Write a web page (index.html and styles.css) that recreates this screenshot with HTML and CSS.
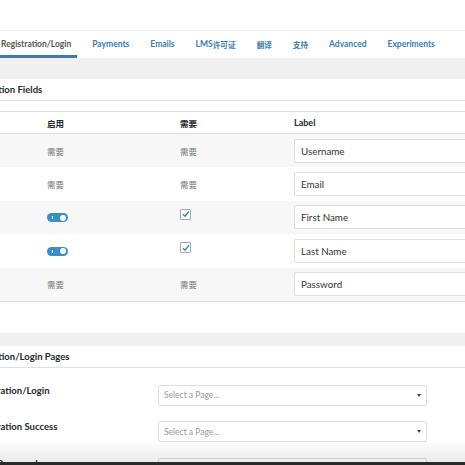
FILE: index.html
```html
<!DOCTYPE html>
<html lang="zh">
<head>
    <meta charset="UTF-8">
    <title>Registration/Login</title>
    <link rel="stylesheet" href="styles.css">
</head>
<body>

<div class="page">
    <div class="top-space"></div>

    <nav class="tabs">
        <a class="tab active">Registration/Login</a>
        <a class="tab">Payments</a>
        <a class="tab">Emails</a>
        <a class="tab">LMS<span class="cjk">许可证</span></a>
        <a class="tab cjk">翻译</a>
        <a class="tab cjk">支持</a>
        <a class="tab">Advanced</a>
        <a class="tab">Experiments</a>
    </nav>

    <div class="band"></div>

    <section class="card">
        <h2 class="card-title">Registration Fields</h2>
        <div class="card-body">
            <div class="fields">
                <div class="row head">
                    <div class="cell name">Field</div>
                    <div class="cell cjk">启用</div>
                    <div class="cell cjk">需要</div>
                    <div class="cell">Label</div>
                </div>
                <div class="row odd">
                    <div class="cell name">Username</div>
                    <div class="cell muted">需要</div>
                    <div class="cell muted">需要</div>
                    <div class="cell"><input class="text-input" type="text" value="Username"></div>
                </div>
                <div class="row">
                    <div class="cell name">Email</div>
                    <div class="cell muted">需要</div>
                    <div class="cell muted">需要</div>
                    <div class="cell"><input class="text-input" type="text" value="Email"></div>
                </div>
                <div class="row odd">
                    <div class="cell name">First Name</div>
                    <div class="cell"><span class="toggle"><span class="toggle-mark"></span><span class="toggle-knob"></span></span></div>
                    <div class="cell"><span class="checkbox"><svg width="8" height="8" viewBox="0 0 8 8"><path d="M1 4.2 L3.1 6.2 L7 1.4" fill="none" stroke="#2f7db6" stroke-width="1.3"/></svg></span></div>
                    <div class="cell"><input class="text-input" type="text" value="First Name"></div>
                </div>
                <div class="row">
                    <div class="cell name">Last Name</div>
                    <div class="cell"><span class="toggle"><span class="toggle-mark"></span><span class="toggle-knob"></span></span></div>
                    <div class="cell"><span class="checkbox"><svg width="8" height="8" viewBox="0 0 8 8"><path d="M1 4.2 L3.1 6.2 L7 1.4" fill="none" stroke="#2f7db6" stroke-width="1.3"/></svg></span></div>
                    <div class="cell"><input class="text-input" type="text" value="Last Name"></div>
                </div>
                <div class="row odd">
                    <div class="cell name">Password</div>
                    <div class="cell muted">需要</div>
                    <div class="cell muted">需要</div>
                    <div class="cell"><input class="text-input" type="text" value="Password"></div>
                </div>
            </div>
        </div>
    </section>

    <div class="band small"></div>

    <section class="card">
        <h2 class="card-title">Registration/Login Pages</h2>
        <div class="pages">
            <div class="page-row">
                <label class="page-label">Registration/Login</label>
                <div class="select"><span>Select a Page...</span><span class="arrow"></span></div>
            </div>
            <div class="page-row">
                <label class="page-label">Registration Success</label>
                <div class="select"><span>Select a Page...</span><span class="arrow"></span></div>
            </div>
            <div class="page-row">
                <label class="page-label">Reset Password</label>
                <div class="select"><span>Select a Page...</span><span class="arrow"></span></div>
            </div>
        </div>
    </section>
</div>

<div class="window-edge"></div>

</body>
</html>
```

FILE: styles.css
```css
body {
    margin: 0;
    padding: 0;
    font-family: Lato, "Noto Sans CJK SC", sans-serif;
    color: #23282d;
    background-color: #fff;
    overflow: hidden;
}
.page {
    margin-left: -100px;
    width: 620px;
}
.cjk {
    font-size: 0.9em;
}
.top-space {
    height: 30px;
}
.tabs {
    display: flex;
    gap: 9px;
    height: 27px;
    padding-left: 95px;
    border-top: 1px solid #ececec;
}
.tab {
    display: flex;
    align-items: center;
    padding: 2px 6px 0;
    font-size: 8.5px;
    font-weight: bold;
    color: #3b7bb0;
    border-bottom: 3px solid transparent;
}
.tab.cjk {
    font-size: 7.6px;
}
.tab.active {
    color: #555;
    border-bottom-color: #3b7bb0;
}
.band {
    height: 21px;
    background-color: #f0f0f0;
}
.band.small {
    height: 13px;
}
.card {
    background-color: #fff;
}
.card-title {
    margin: 0;
    height: 21px;
    line-height: 21px;
    padding-left: 64px;
    font-size: 9.5px;
    font-weight: bold;
    border-bottom: 1px solid #dedede;
}
.card-body {
    padding: 10px 0 31px;
}
.fields {
    border-top: 1px solid #dcdcdc;
    border-bottom: 1px solid #dcdcdc;
}
.row {
    display: grid;
    grid-template-columns: 147px 133px 114px 1fr;
    height: 33.4px;
    align-items: center;
    font-size: 8.5px;
}
.row.odd {
    background-color: #f7f7f7;
}
.row.head {
    height: 21px;
    font-weight: bold;
    font-size: 9px;
    border-bottom: 1px solid #dcdcdc;
}
.row.head .cjk {
    font-size: 8.5px;
}
.cell {
    display: flex;
    align-items: center;
}
.cell.name {
    padding-left: 10px;
}
.muted {
    color: #777;
}
.text-input {
    width: 220px;
    height: 24px;
    box-sizing: border-box;
    border: 1px solid #dddddd;
    border-radius: 2px;
    padding: 0 6px;
    font-family: Lato, sans-serif;
    font-size: 9.8px;
    color: #333;
    background-color: #fff;
}
.toggle {
    position: relative;
    display: inline-block;
    width: 21px;
    height: 9px;
    border-radius: 5px;
    background-color: #3a8dc8;
    margin-top: 1px;
}
.toggle-mark {
    position: absolute;
    left: 5px;
    top: 3px;
    width: 1px;
    height: 3px;
    background-color: #fff;
}
.toggle-knob {
    position: absolute;
    right: 2px;
    top: 1.5px;
    width: 6px;
    height: 6px;
    border-radius: 50%;
    background-color: #fff;
}
.checkbox {
    display: inline-flex;
    align-items: center;
    justify-content: center;
    width: 9px;
    height: 9px;
    border: 1px solid #a8a8a8;
    border-radius: 1px;
    background-color: #fff;
    margin-top: -6px;
}
.pages {
    padding-top: 17px;
}
.page-row {
    display: flex;
    align-items: center;
    height: 21px;
    margin-bottom: 15.5px;
}
.page-label {
    width: 258px;
    box-sizing: border-box;
    padding-left: 71px;
    font-size: 9.5px;
    font-weight: bold;
    align-self: flex-start;
}
.select {
    display: flex;
    align-items: center;
    justify-content: space-between;
    width: 269px;
    height: 21px;
    box-sizing: border-box;
    border: 1px solid #dedede;
    border-radius: 2px;
    padding: 0 5px;
    font-size: 8.5px;
    color: #999;
    background-color: #fff;
}
.arrow {
    width: 0;
    height: 0;
    border-left: 2.5px solid transparent;
    border-right: 2.5px solid transparent;
    border-top: 3px solid #444;
}
.window-edge {
    position: fixed;
    left: 0;
    right: 0;
    bottom: 0;
    height: 26px;
    background: linear-gradient(to bottom, rgba(0, 0, 0, 0) 0%, rgba(0, 0, 0, 0.08) 88%, #2b2b2b 89%, #2b2b2b 100%);
}
```
